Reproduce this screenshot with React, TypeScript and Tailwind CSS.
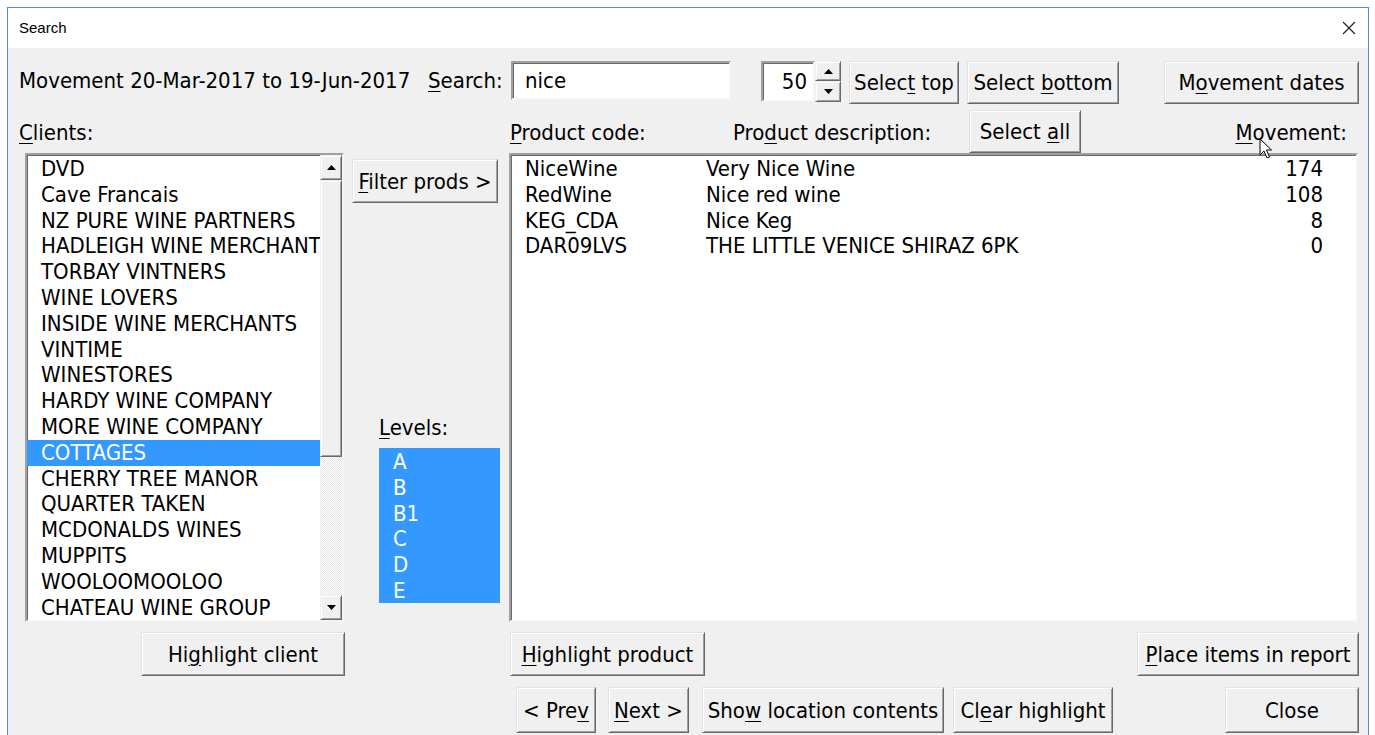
import React from "react";

const clients = [
  "DVD",
  "Cave Francais",
  "NZ PURE WINE PARTNERS",
  "HADLEIGH WINE MERCHANTS",
  "TORBAY VINTNERS",
  "WINE LOVERS",
  "INSIDE WINE MERCHANTS",
  "VINTIME",
  "WINESTORES",
  "HARDY WINE COMPANY",
  "MORE WINE COMPANY",
  "COTTAGES",
  "CHERRY TREE MANOR",
  "QUARTER TAKEN",
  "MCDONALDS WINES",
  "MUPPITS",
  "WOOLOOMOOLOO",
  "CHATEAU WINE GROUP",
];

const levels = ["A", "B", "B1", "C", "D", "E"];

const products = [
  { code: "NiceWine", desc: "Very Nice Wine", qty: 174 },
  { code: "RedWine", desc: "Nice red wine", qty: 108 },
  { code: "KEG_CDA", desc: "Nice Keg", qty: 8 },
  { code: "DAR09LVS", desc: "THE LITTLE VENICE SHIRAZ 6PK", qty: 0 },
];

// Text with an underlined access key, like a WinForms/VBA caption.
function Cap({ pre = "", k, post = "" }: { pre?: string; k: string; post?: string }) {
  return (
    <span className="whitespace-pre">
      {pre}
      <span className="underline decoration-1 underline-offset-[3px]">{k}</span>
      {post}
    </span>
  );
}

function Btn({ className = "", children }: { className?: string; children: React.ReactNode }) {
  return (
    <div
      className={
        "flex shrink-0 items-center justify-center border border-[#e3e3e3] border-r-[#696969] border-b-[#696969] bg-[#f0f0f0] shadow-[inset_1px_1px_0_#ffffff,inset_-1px_-1px_0_#a0a0a0] " +
        className
      }
    >
      {children}
    </div>
  );
}

function Sunken({ className = "", children }: { className?: string; children?: React.ReactNode }) {
  return (
    <div
      className={
        "shrink-0 border-2 border-[#a0a0a0] border-r-[#f4f4f4] border-b-[#f4f4f4] bg-white shadow-[inset_1px_1px_0_#696969] " +
        className
      }
    >
      {children}
    </div>
  );
}

function TriUp() {
  return (
    <svg width="9" height="5" viewBox="0 0 9 5">
      <path d="M4.5 0 L9 5 L0 5 Z" fill="#000" />
    </svg>
  );
}

function TriDown() {
  return (
    <svg width="9" height="5" viewBox="0 0 9 5">
      <path d="M0 0 L9 0 L4.5 5 Z" fill="#000" />
    </svg>
  );
}

function SmallBtn({ className = "", children }: { className?: string; children: React.ReactNode }) {
  return (
    <div
      className={
        "flex items-center justify-center border border-[#f0f0f0] border-r-[#696969] border-b-[#696969] bg-[#f0f0f0] shadow-[inset_1px_1px_0_#ffffff,inset_-1px_-1px_0_#a0a0a0] " +
        className
      }
    >
      {children}
    </div>
  );
}

export default function App() {
  return (
    <div className="relative h-[735px] w-[1375px] overflow-hidden bg-white font-['DejaVu_Sans_Condensed','Liberation_Sans',Arial,sans-serif] text-[22px] text-black [font-stretch:condensed]">
      {/* dialog window */}
      <div className="ml-[7px] mt-[7px] flex h-[728px] w-[1362px] flex-col border border-b-0 border-[#4a8fd8]">
        {/* title bar */}
        <div className="flex h-[40px] shrink-0 items-center justify-between bg-white pl-[11px] pr-[12px]">
          <span className="font-['Liberation_Sans',Arial,sans-serif] text-[15px] text-[#000] [font-stretch:normal]">
            Search
          </span>
          <svg width="14" height="14" viewBox="0 0 14 14">
            <path d="M1 1 L13 13 M13 1 L1 13" stroke="#222" strokeWidth="1.2" />
          </svg>
        </div>

        {/* client area */}
        <div className="flex flex-1 flex-col overflow-hidden bg-[#f0f0f0]">
          {/* row: period, search, top/bottom selection */}
          <div className="mt-[13px] flex h-[43px] shrink-0 items-start">
            <div className="ml-[11px] flex h-[39px] w-[409px] shrink-0 items-center whitespace-nowrap">
              Movement 20-Mar-2017 to 19-Jun-2017
            </div>
            <div className="flex h-[39px] w-[83px] shrink-0 items-center">
              <Cap k="S" post="earch:" />
            </div>
            <Sunken className="flex h-[39px] w-[220px] items-center pl-[12px]">nice</Sunken>
            <div className="ml-[30px] flex shrink-0">
              <Sunken className="flex h-[41px] w-[54px] items-center justify-end pr-[6px]">50</Sunken>
              <div className="flex h-[41px] w-[26px] flex-col">
                <SmallBtn className="h-[20px]">
                  <TriUp />
                </SmallBtn>
                <SmallBtn className="h-[21px]">
                  <TriDown />
                </SmallBtn>
              </div>
            </div>
            <Btn className="ml-[8px] h-[43px] w-[110px]">
              <Cap pre="Selec" k="t" post=" top" />
            </Btn>
            <Btn className="ml-[8px] h-[43px] w-[152px]">
              <Cap pre="Select " k="b" post="ottom" />
            </Btn>
            <Btn className="ml-[45px] h-[43px] w-[195px]">
              <Cap pre="M" k="o" post="vement dates" />
            </Btn>
          </div>

          {/* row: column captions */}
          <div className="flex h-[49px] shrink-0 items-end">
            <div className="mb-[7px] ml-[11px] h-[26px] w-[491px] shrink-0 leading-[26px]">
              <Cap k="C" post="lients:" />
            </div>
            <div className="mb-[7px] h-[26px] w-[223px] shrink-0 leading-[26px]">
              <Cap k="P" post="roduct code:" />
            </div>
            <div className="mb-[7px] h-[26px] w-[236px] shrink-0 leading-[26px]">
              <Cap pre="Pro" k="d" post="uct description:" />
            </div>
            <Btn className="h-[43px] w-[112px]">
              <Cap pre="Select " k="a" post="ll" />
            </Btn>
            <div className="mb-[7px] h-[26px] flex-1 pr-[21px] text-right leading-[26px]">
              <Cap k="M" post="ovement:" />
            </div>
          </div>

          {/* row: lists */}
          <div className="flex h-[469px] shrink-0">
            {/* clients list */}
            <Sunken className="ml-[17px] flex h-[469px] w-[319px]">
              <div className="flex-1 overflow-hidden pt-[1px]">
                {clients.map((c) => (
                  <div
                    key={c}
                    className={
                      "h-[25.8px] whitespace-nowrap pl-[14px] leading-[25.8px] " +
                      (c === "COTTAGES" ? "bg-[#3399ff] text-white" : "")
                    }
                  >
                    {c}
                  </div>
                ))}
              </div>
              {/* vertical scrollbar */}
              <div className="flex w-[22px] shrink-0 flex-col">
                <SmallBtn className="h-[25px] shrink-0">
                  <TriUp />
                </SmallBtn>
                <SmallBtn className="h-[277px] shrink-0">
                  <span />
                </SmallBtn>
                <div className="flex-1 bg-[repeating-conic-gradient(#e4e4e4_0%_25%,#ffffff_0%_50%)] bg-size-[2px_2px]" />
                <SmallBtn className="h-[25px] shrink-0">
                  <TriDown />
                </SmallBtn>
              </div>
            </Sunken>

            {/* middle column */}
            <div className="ml-[8px] flex w-[148px] shrink-0 flex-col">
              <Btn className="mt-[6px] h-[44px] w-[146px]">
                <Cap k="F" post="ilter prods >" />
              </Btn>
              <div className="ml-[27px] mt-[212px] h-[26px] leading-[26px]">
                <Cap k="L" post="evels:" />
              </div>
              <div className="ml-[27px] mt-[7px] h-[155px] w-[121px] bg-[#3399ff] pt-[1px] text-white">
                {levels.map((l) => (
                  <div key={l} className="h-[25.8px] pl-[14px] leading-[25.8px]">
                    {l}
                  </div>
                ))}
              </div>
            </div>

            {/* products list */}
            <Sunken className="ml-[9px] h-[469px] w-[849px] pt-[1px]">
              {products.map((p) => (
                <div key={p.code} className="flex h-[25.8px] leading-[25.8px]">
                  <div className="w-[195px] shrink-0 pl-[14px]">{p.code}</div>
                  <div className="flex-1 whitespace-nowrap">{p.desc}</div>
                  <div className="w-[120px] shrink-0 pr-[33px] text-right">{p.qty}</div>
                </div>
              ))}
            </Sunken>
          </div>

          {/* row: highlight / report */}
          <div className="mt-[10px] flex h-[44px] shrink-0">
            <Btn className="ml-[133px] h-[44px] w-[204px]">
              <Cap pre="Hi" k="g" post="hlight client" />
            </Btn>
            <Btn className="ml-[165px] h-[44px] w-[195px]">
              <Cap k="H" post="ighlight product" />
            </Btn>
            <Btn className="ml-[432px] h-[44px] w-[222px]">
              <Cap k="P" post="lace items in report" />
            </Btn>
          </div>

          {/* row: navigation */}
          <div className="mt-[11px] flex h-[46px] shrink-0">
            <Btn className="ml-[508px] h-[46px] w-[80px]">
              <Cap pre="< Pre" k="v" />
            </Btn>
            <Btn className="ml-[12px] h-[46px] w-[81px]">
              <Cap k="N" post="ext >" />
            </Btn>
            <Btn className="ml-[13px] h-[46px] w-[242px]">
              <Cap pre="Sho" k="w" post=" location contents" />
            </Btn>
            <Btn className="ml-[9px] h-[46px] w-[160px]">
              <Cap pre="Cl" k="e" post="ar highlight" />
            </Btn>
            <Btn className="ml-[112px] h-[46px] w-[134px]">Close</Btn>
          </div>
        </div>
      </div>

      {/* mouse pointer */}
      <svg
        className="absolute left-[1259px] top-[138px]"
        width="14"
        height="22"
        viewBox="0 0 14 22"
      >
        <path
          d="M1 1 L1 17 L5 13 L8 20 L10.5 19 L7.5 12 L12.5 12 Z"
          fill="#fff"
          stroke="#000"
          strokeWidth="1"
          strokeLinejoin="miter"
        />
      </svg>
    </div>
  );
}
